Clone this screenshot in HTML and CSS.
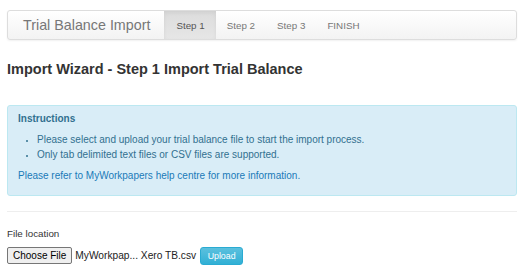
FILE: index.html
```html
<!DOCTYPE html>
<html>
<head>
<meta charset="utf-8">
<link rel="stylesheet" href="styles.css">
</head>
<body>
<nav class="navbar">
  <span class="brand">Trial Balance Import</span>
  <ul class="steps">
    <li class="step active">Step 1</li>
    <li class="step">Step 2</li>
    <li class="step">Step 3</li>
    <li class="step">FINISH</li>
  </ul>
</nav>
<h1 class="title">Import Wizard - Step 1 Import Trial Balance</h1>
<div class="alert">
  <div class="alert-head">Instructions</div>
  <ul class="alert-list">
    <li>Please select and upload your trial balance file to start the import process.</li>
    <li>Only tab delimited text files or CSV files are supported.</li>
  </ul>
  <p class="alert-link">Please refer to MyWorkpapers help centre for more information.</p>
</div>
<hr class="divider">
<div class="form">
  <label class="label">File location</label>
  <div class="file-row">
    <span class="choose">Choose File</span>
    <span class="filename">MyWorkpap... Xero TB.csv</span>
    <span class="upload">Upload</span>
  </div>
</div>
</body>
</html>
```
FILE: styles.css
```css
* { box-sizing: border-box; }
body {
  margin: 0;
  padding: 10px 6px 0 7px;
  font-family: "Liberation Sans", Arial, sans-serif;
  color: #333;
  background: #fff;
}
.navbar {
  display: flex;
  align-items: stretch;
  height: 30px;
  border: 1px solid #ddd;
  border-radius: 3px;
  background: linear-gradient(#fff, #f3f3f3);
  box-shadow: 0 1px 2px rgba(0,0,0,0.06);
}
.brand {
  font-size: 14.3px;
  color: #777;
  padding: 0 14px 0 15px;
  display: flex;
  align-items: center;
}
.steps {
  list-style: none;
  margin: 0;
  padding: 0;
  display: flex;
}
.step {
  font-size: 9.8px;
  color: #777;
  padding: 0 11px;
  display: flex;
  align-items: center;
}
.step.active {
  background: linear-gradient(#dcdcdc, #e6e6e6);
  color: #555;
  padding: 0 11px 0 12px;
  box-shadow: inset 0 2px 4px rgba(0,0,0,0.06);
}
.title {
  font-size: 14.5px;
  font-weight: bold;
  margin: 19px 0 0 0;
  line-height: 20px;
  color: #333;
}
.alert {
  margin-top: 26px;
  background: #d9edf7;
  border: 1px solid #bce8f1;
  border-radius: 3px;
  color: #31708f;
  padding: 6px 11px 12px 10px;
  font-size: 10px;
}
.alert-head {
  font-weight: bold;
  font-size: 10px;
  line-height: 14px;
}
.alert-list {
  margin: 5.5px 0 0 0;
  padding-left: 19px;
  line-height: 15px;
  list-style: disc;
}
.alert-list li::marker { font-size: 8px; }
.alert-link {
  margin: 6px 0 0 0;
  line-height: 15px;
  color: #1a7ab8;
}
.divider {
  border: 0;
  border-top: 1px solid #eee;
  margin: 15px 0 0 0;
}
.form { margin-top: 15.5px; }
.label {
  display: block;
  font-size: 9.8px;
  color: #333;
  line-height: 14px;
}
.file-row {
  display: flex;
  align-items: center;
  margin-top: 5.5px;
  font-size: 10.2px;
}
.choose {
  display: inline-block;
  border: 1px solid #767676;
  border-radius: 2px;
  background: #efefef;
  color: #000;
  padding: 1px 5px;
  line-height: 13px;
  font-size: 10px;
}
.filename {
  margin-left: 3px;
  color: #222;
}
.upload {
  margin-left: 4px;
  background: linear-gradient(#5bc0de, #31b0d5);
  border: 1px solid #2aabd2;
  border-radius: 3px;
  color: #fff;
  font-size: 8.8px;
  padding: 0 6.5px;
  line-height: 16px;
}
```
